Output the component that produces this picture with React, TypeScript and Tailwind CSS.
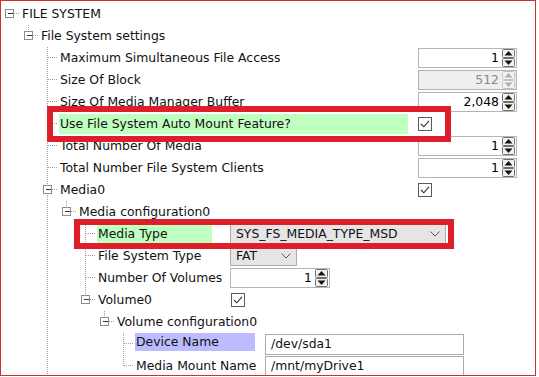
import React from "react";

type Widget =
  | { kind: "spin"; x: number; w: number; value: string; disabled?: boolean }
  | { kind: "check"; x: number }
  | { kind: "select"; x: number; w: number; value: string }
  | { kind: "text"; x: number; w: number; value: string };

type Row = {
  level: number;
  label: string;
  box?: boolean;
  full?: number[];
  top?: number[];
  hl?: { color: string; end: number; short?: boolean };
  widget?: Widget;
};

const GREEN = "#bfffbf";
const LAVENDER = "#bcbcff";

const rows: Row[] = [
  { level: 0, label: "FILE SYSTEM", box: true },
  { level: 1, label: "File System settings", box: true, top: [1] },
  { level: 2, label: "Maximum Simultaneous File Access", full: [2], widget: { kind: "spin", x: 418, w: 99, value: "1" } },
  { level: 2, label: "Size Of Block", full: [2], widget: { kind: "spin", x: 418, w: 99, value: "512", disabled: true } },
  { level: 2, label: "Size Of Media Manager Buffer", full: [2], widget: { kind: "spin", x: 418, w: 99, value: "2,048" } },
  { level: 2, label: "Use File System Auto Mount Feature?", full: [2], hl: { color: GREEN, end: 408 }, widget: { kind: "check", x: 418 } },
  { level: 2, label: "Total Number Of Media", full: [2], widget: { kind: "spin", x: 418, w: 99, value: "1" } },
  { level: 2, label: "Total Number File System Clients", full: [2], widget: { kind: "spin", x: 418, w: 99, value: "1" } },
  { level: 2, label: "Media0", box: true, full: [2], widget: { kind: "check", x: 418 } },
  { level: 3, label: "Media configuration0", box: true, full: [2], top: [3] },
  { level: 4, label: "Media Type", full: [2, 4], hl: { color: GREEN, end: 212 }, widget: { kind: "select", x: 230, w: 216, value: "SYS_FS_MEDIA_TYPE_MSD" } },
  { level: 4, label: "File System Type", full: [2, 4], widget: { kind: "select", x: 230, w: 67, value: "FAT" } },
  { level: 4, label: "Number Of Volumes", full: [2, 4], widget: { kind: "spin", x: 230, w: 100, value: "1" } },
  { level: 4, label: "Volume0", box: true, full: [2], top: [4], widget: { kind: "check", x: 231 } },
  { level: 5, label: "Volume configuration0", box: true, full: [2], top: [5] },
  { level: 6, label: "Device Name", full: [2, 6], hl: { color: LAVENDER, end: 255, short: true }, widget: { kind: "text", x: 265, w: 199, value: "/dev/sda1" } },
  { level: 6, label: "Media Mount Name", full: [2], top: [6], widget: { kind: "text", x: 265, w: 199, value: "/mnt/myDrive1" } },
];

const handleX = (l: number) => 9 + 19 * l;
const textX = (l: number) => 21 + 19 * l;

function Guides({ row }: { row: Row }) {
  const tx = textX(row.level);
  const c = handleX(row.level);
  const dot = { stroke: "#a0a0a0", strokeWidth: 1, strokeDasharray: "1 1" };
  return (
    <svg width={tx - 1} height={22} viewBox={`1 0 ${tx - 1} 22`} className="shrink-0 self-start">
      {(row.full ?? []).map((l) => (
        <line key={"f" + l} x1={handleX(l) + 0.5} y1={0} x2={handleX(l) + 0.5} y2={22} {...dot} />
      ))}
      {(row.top ?? []).map((l) => (
        <line key={"t" + l} x1={handleX(l) + 0.5} y1={0} x2={handleX(l) + 0.5} y2={11} {...dot} />
      ))}
      {row.box && (
        <line x1={handleX(row.level + 1) + 0.5} y1={18} x2={handleX(row.level + 1) + 0.5} y2={22} {...dot} />
      )}
      <line x1={row.box ? c + 5 : c + 1} y1={10.5} x2={tx - 2} y2={10.5} {...dot} />
      {row.box && (
        <g>
          <rect x={c - 3.5} y={6.5} width={8} height={8} fill="#fff" stroke="#8c8c8c" />
          <line x1={c - 1} y1={10.5} x2={c + 4} y2={10.5} stroke="#333" />
        </g>
      )}
    </svg>
  );
}

function SpinButtons({ disabled }: { disabled?: boolean }) {
  const fg = disabled ? "#b0b0b0" : "#111";
  const bd = disabled ? "#c4c4c4" : "#707070";
  return (
    <svg width={13} height={18} className="shrink-0">
      <rect x={0.5} y={0.5} width={12} height={8} rx={1} fill="#f2f2f2" stroke={bd} />
      <path d="M2.5 6.5 L6.5 2 L10.5 6.5 Z" fill={fg} />
      <rect x={0.5} y={9.5} width={12} height={8} rx={1} fill="#f2f2f2" stroke={bd} />
      <path d="M2.5 11.5 L6.5 16 L10.5 11.5 Z" fill={fg} />
    </svg>
  );
}

function Value({ w }: { w: Widget }) {
  if (w.kind === "spin") {
    return (
      <div
        className={`flex h-[20px] shrink-0 items-center border border-[#b5b5b5] pr-[1px] ${w.disabled ? "bg-[#efefef] text-[#8a8a8a]" : "bg-white text-black"}`}
        style={{ width: w.w }}
      >
        <span className="flex-1 pr-[3px] text-right">{w.value}</span>
        <SpinButtons disabled={w.disabled} />
      </div>
    );
  }
  if (w.kind === "check") {
    return (
      <svg width={14} height={14} className="shrink-0">
        <rect x={0.5} y={0.5} width={13} height={13} fill="#fff" stroke="#5a5a5a" />
        <path d="M3 7 L5.8 9.8 L11 3.8" fill="none" stroke="#333" strokeWidth={1.1} />
      </svg>
    );
  }
  if (w.kind === "select") {
    return (
      <div
        className="flex h-[20px] shrink-0 items-center border border-[#adadad] bg-[#e5e5e5] pl-[5px] pr-[5px]"
        style={{ width: w.w }}
      >
        <span className="flex-1">{w.value}</span>
        <svg width={10} height={6} className="shrink-0">
          <path d="M0.5 0.5 L5 5 L9.5 0.5" fill="none" stroke="#555" />
        </svg>
      </div>
    );
  }
  return (
    <div className="flex h-[21px] shrink-0 items-center border border-[#acacac] bg-white pl-[5px]" style={{ width: w.w }}>
      {w.value}
    </div>
  );
}

function TreeRow({ row }: { row: Row }) {
  const tx = textX(row.level);
  return (
    <div className="flex h-[22px] items-center">
      <Guides row={row} />
      <div className="flex shrink-0 items-center self-stretch" style={{ width: row.widget ? row.widget.x - tx : undefined }}>
        {row.hl ? (
          <div
            className={`flex items-center pl-[1px] ${row.hl.short ? "h-[18px] self-start" : "h-[20px]"}`}
            style={{ width: row.hl.end - tx, background: row.hl.color }}
          >
            {row.label}
          </div>
        ) : (
          <span className="pl-[1px] whitespace-nowrap">{row.label}</span>
        )}
      </div>
      {row.widget && <Value w={row.widget} />}
    </div>
  );
}

export default function App() {
  return (
    <div className="h-[377px] w-[539px] overflow-hidden bg-white">
      <div
        className="relative h-[376px] w-[536px] overflow-hidden border border-[#c8342c] pt-[2px] text-[12.4px] text-[#111]"
        style={{ fontFamily: '"DejaVu Sans", Verdana, sans-serif' }}
      >
        {rows.map((r, i) => (
          <TreeRow key={i} row={r} />
        ))}
        {/* red callout frames */}
        <div className="absolute left-[46px] top-[105px] h-[36px] w-[404px] border-[6px] border-[#dc1f2b]" />
        <div className="absolute left-[73px] top-[218px] h-[30px] w-[380px] border-[6px] border-[#dc1f2b]" />
      </div>
    </div>
  );
}
